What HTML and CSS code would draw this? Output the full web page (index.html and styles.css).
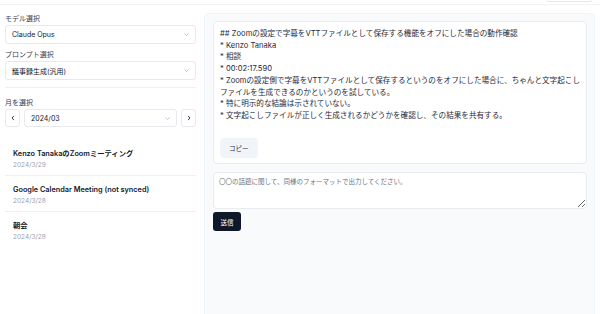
FILE: index.html
```html
<!DOCTYPE html>
<html lang="ja">
  <head>
    <meta charset="UTF-8" />
    <meta name="viewport" content="width=device-width, initial-scale=1.0" />
    <title>議事録</title>
    <link rel="stylesheet" href="styles.css">
  </head>
  <body>
    <header class="topbar">
      <div class="topbar-btn"></div>
    </header>

    <div class="layout">
      <aside class="sidebar">
        <label class="field-label">モデル選択</label>
        <div class="select">
          <span>Claude Opus</span>
          <svg class="chevron" viewBox="0 0 10 6"><path d="M1 1l4 4 4-4" /></svg>
        </div>

        <label class="field-label">プロンプト選択</label>
        <div class="select">
          <span>議事録生成(汎用)</span>
          <svg class="chevron" viewBox="0 0 10 6"><path d="M1 1l4 4 4-4" /></svg>
        </div>

        <hr class="divider" />

        <label class="field-label">月を選択</label>
        <div class="month-row">
          <button class="nav-btn">
            <svg viewBox="0 0 6 10"><path d="M4.5 1.5L1.5 5l3 3.5" /></svg>
          </button>
          <div class="select month-select">
            <span>2024/03</span>
            <svg class="chevron" viewBox="0 0 10 6"><path d="M1 1l4 4 4-4" /></svg>
          </div>
          <button class="nav-btn">
            <svg viewBox="0 0 6 10"><path d="M1.5 1.5L4.5 5l-3 3.5" /></svg>
          </button>
        </div>

        <ul class="meeting-list">
          <li class="meeting">
            <div class="meeting-title">Kenzo TanakaのZoomミーティング</div>
            <div class="meeting-date">2024/3/29</div>
          </li>
          <li class="meeting">
            <div class="meeting-title">Google Calendar Meeting (not synced)</div>
            <div class="meeting-date">2024/3/28</div>
          </li>
          <li class="meeting">
            <div class="meeting-title">朝会</div>
            <div class="meeting-date">2024/3/28</div>
          </li>
        </ul>
      </aside>

      <main class="panel">
        <div class="result-card">
          <div class="result-text">
            <p>## Zoomの設定で字幕をVTTファイルとして保存する機能をオフにした場合の動作確認</p>
            <p>* Kenzo Tanaka</p>
            <p>* 相談</p>
            <p>* 00:02:17.590</p>
            <p>* Zoomの設定側で字幕をVTTファイルとして保存するというのをオフにした場合に、ちゃんと文字起こしファイルを生成できるのかというのを試している。</p>
            <p>* 特に明示的な結論は示されていない。</p>
            <p>* 文字起こしファイルが正しく生成されるかどうかを確認し、その結果を共有する。</p>
          </div>
          <button class="copy-btn">コピー</button>
        </div>

        <textarea class="prompt-input" placeholder="〇〇の話題に関して、同様のフォーマットで出力してください。"></textarea>
        <button class="send-btn">送信</button>
      </main>
    </div>
  </body>
</html>
```

FILE: styles.css
```css
* {
  box-sizing: border-box;
}

body {
  margin: 0;
  font-family: Inter, "Noto Sans CJK JP", sans-serif;
  color: #1f2937;
  background-color: #fff;
  height: 314px;
  overflow: hidden;
}

.topbar {
  height: 5px;
  border-bottom: 1px solid #f1f3f7;
  display: flex;
  justify-content: flex-end;
}

.topbar-btn {
  width: 45px;
  height: 2px;
  margin-right: 8px;
  border: 1px solid #e5e8ee;
  border-top: none;
  border-radius: 0 0 3px 3px;
}

.layout {
  display: flex;
  height: 309px;
}

/* left column */
.sidebar {
  width: 204px;
  flex-shrink: 0;
  padding: 9px 8px 0 5px;
  display: flex;
  flex-direction: column;
}

.field-label {
  font-size: 7px;
  line-height: 9px;
  color: #374151;
  margin-bottom: 2px;
}

.select {
  height: 19px;
  border: 1px solid #e7e9ee;
  border-radius: 3px;
  display: flex;
  align-items: center;
  justify-content: space-between;
  padding: 0 6px;
  font-size: 7px;
  color: #111827;
  margin-bottom: 6px;
}

.chevron {
  width: 5px;
  height: 3px;
  fill: none;
  stroke: #a3a9b3;
  stroke-width: 1.3;
}

.divider {
  border: none;
  border-top: 1px solid #eef0f3;
  margin: 1px 0 10px;
}

.month-row {
  display: flex;
  gap: 4px;
  height: 18px;
}

.month-row .select {
  height: 18px;
  margin-bottom: 0;
}

.month-select {
  flex: 1;
}

.nav-btn {
  width: 15px;
  height: 18px;
  padding: 0;
  border: 1px solid #e7e9ee;
  border-radius: 3px;
  background-color: #fff;
  display: flex;
  align-items: center;
  justify-content: center;
}

.nav-btn svg {
  width: 4px;
  height: 6px;
  fill: none;
  stroke: #111827;
  stroke-width: 1.4;
}

.meeting-list {
  list-style: none;
  margin: 13px 0 0;
  padding: 0;
}

.meeting {
  height: 36px;
  padding: 9px 8px 0;
  border-bottom: 1px solid #eef0f3;
}

.meeting:last-child {
  border-bottom: none;
}

.meeting-title {
  font-size: 7.3px;
  line-height: 10px;
  font-weight: 600;
  color: #111827;
  white-space: nowrap;
}

.meeting-date {
  font-size: 6.5px;
  line-height: 10px;
  margin-top: 1px;
  color: #9ca3af;
}

/* right column */
.panel {
  flex: 1;
  margin: 8px 5px 0 0;
  padding: 7px 7px 0 8px;
  background-color: #f8fafc;
  border: 1px solid #f0f3f7;
  border-bottom: none;
  border-radius: 5px 5px 0 0;
  display: flex;
  flex-direction: column;
  align-items: flex-start;
}

.result-card {
  width: 100%;
  height: 143px;
  background-color: #fff;
  border: 1px solid #e8ebf0;
  border-radius: 4px;
  padding: 6px 0 0 6px;
}

.result-text {
  font-size: 7.6px;
  line-height: 11.7px;
  color: #1f2937;
}

.result-text p {
  margin: 0;
}

.copy-btn {
  margin-top: 16px;
  height: 20px;
  padding: 0 9px;
  border: none;
  border-radius: 4px;
  background-color: #f1f5f9;
  font-family: inherit;
  font-size: 6.5px;
  color: #1f2937;
}

.prompt-input {
  width: 100%;
  height: 37px;
  margin-top: 8px;
  padding: 5px 5px;
  border: 1px solid #e8ebf0;
  border-radius: 4px;
  background-color: #fff;
  font-family: inherit;
  font-size: 6.5px;
  line-height: 9px;
  resize: vertical;
}

.prompt-input::placeholder {
  color: #6b7280;
}

.send-btn {
  margin-top: 3px;
  height: 19px;
  width: 28px;
  padding: 0;
  border: none;
  border-radius: 3px;
  background-color: #0f172a;
  color: #fff;
  font-family: inherit;
  font-size: 6.5px;
}
```
